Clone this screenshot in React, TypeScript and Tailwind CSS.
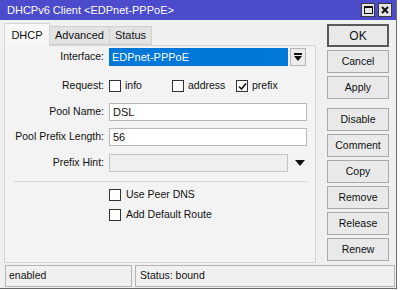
import React from "react";

function Check({ checked = false }: { checked?: boolean }) {
    return (
        <span className="w-[12px] h-[12px] border border-[#333] bg-white flex items-center justify-center shrink-0">
            {checked && (
                <svg width="9" height="9" viewBox="0 0 9 9">
                    <path d="M1 4.5 L3.5 7 L8 1.5" stroke="#111" strokeWidth="1.6" fill="none" />
                </svg>
            )}
        </span>
    );
}

function Btn({ label, strong = false, className = "" }: { label: string; strong?: boolean; className?: string }) {
    return (
        <div
            className={
                "h-[23px] w-[62px] flex items-center justify-center bg-[#e9e9e9] text-[#111] " +
                (strong ? "border-2 border-[#5a5a5a] text-[12px] " : "border border-[#a9a9a9] ") +
                className
            }
        >
            {label}
        </div>
    );
}

export default function App() {
    return (
        <div className="w-[400px] h-[290px] bg-white overflow-hidden font-['Liberation_Sans',Arial,sans-serif] text-[10.5px] text-[#111]">
            <div className="w-[397px] h-[289px] bg-[#f0f0f0] border-r border-b border-[#6b6b6b] flex flex-col">
                {/* title bar */}
                <div className="h-[20px] bg-[#4b4bcb] flex items-center pl-[7px] pr-[4px] text-white text-[11px]">
                    <span>DHCPv6 Client &lt;EDPnet-PPPoE&gt;</span>
                    <div className="ml-auto flex gap-[3px]">
                        <div className="w-[14px] h-[14px] bg-[#e4e4e4] border border-[#3a3a3a] flex items-center justify-center">
                            <span className="w-[9px] h-[8px] border border-[#111] border-t-2" />
                        </div>
                        <div className="w-[14px] h-[14px] bg-[#e4e4e4] border border-[#3a3a3a] flex items-center justify-center">
                            <svg width="8" height="8" viewBox="0 0 8 8">
                                <path d="M1 1 L7 7 M7 1 L1 7" stroke="#111" strokeWidth="2" />
                            </svg>
                        </div>
                    </div>
                </div>

                <div className="flex h-[243px]">
                    {/* tabs + panel */}
                    <div className="ml-[4px] mt-[2px] w-[312px] flex flex-col">
                        <div className="h-[23px] flex items-end">
                            <div className="h-[23px] w-[46px] bg-[#f7f7f7] border border-b-0 border-[#d4d4d4] flex items-center justify-center text-[11px] relative top-[1px]">
                                DHCP
                            </div>
                            <div className="h-[19px] w-[60px] bg-[#e3e3e3] border border-l-0 border-[#d0d0d0] flex items-center justify-center text-[11px]">
                                Advanced
                            </div>
                            <div className="h-[19px] w-[42px] bg-[#e3e3e3] border border-l-0 border-[#d0d0d0] flex items-center justify-center text-[11px]">
                                Status
                            </div>
                        </div>
                        <div className="flex-1 border border-[#d4d4d4] bg-[#f3f3f3] flex flex-col">
                            <div className="mt-[2px] h-[18px] flex items-center">
                                <span className="w-[99px] text-right">Interface:</span>
                                <div className="ml-[5px] w-[179px] h-[18px] bg-[#0078d7] text-white flex items-center pl-[3px] text-[11px]">
                                    EDPnet-PPPoE
                                </div>
                                <div className="ml-[2px] w-[16px] h-[18px] bg-[#ececec] border border-[#b5b5b5] flex items-center justify-center">
                                    <svg width="8" height="9" viewBox="0 0 8 9">
                                        <rect x="0" y="0" width="8" height="2" fill="#111" />
                                        <path d="M0 3 H8 L4 8 Z" fill="#111" />
                                    </svg>
                                </div>
                            </div>
                            <div className="mt-[11px] h-[18px] flex items-center">
                                <span className="w-[99px] text-right">Request:</span>
                                <div className="ml-[5px] w-[63px] flex items-center gap-[4px]">
                                    <Check />
                                    <span>info</span>
                                </div>
                                <div className="w-[64px] flex items-center gap-[4px]">
                                    <Check />
                                    <span>address</span>
                                </div>
                                <div className="flex items-center gap-[4px]">
                                    <Check checked />
                                    <span>prefix</span>
                                </div>
                            </div>
                            <div className="mt-[8px] h-[18px] flex items-center">
                                <span className="w-[99px] text-right">Pool Name:</span>
                                <div className="ml-[5px] w-[198px] h-[18px] bg-white border border-[#b9b9b9] flex items-center pl-[3px] text-[11px]">
                                    DSL
                                </div>
                            </div>
                            <div className="mt-[7px] h-[18px] flex items-center">
                                <span className="w-[99px] text-right">Pool Prefix Length:</span>
                                <div className="ml-[5px] w-[198px] h-[18px] bg-white border border-[#b9b9b9] flex items-center pl-[3px] text-[11px]">
                                    56
                                </div>
                            </div>
                            <div className="mt-[8px] h-[18px] flex items-center">
                                <span className="w-[99px] text-right">Prefix Hint:</span>
                                <div className="ml-[5px] w-[179px] h-[18px] bg-[#efefef] border border-[#c4c4c4]" />
                                <svg className="ml-[7px]" width="10" height="6" viewBox="0 0 10 6">
                                    <path d="M0 0 H10 L5 6 Z" fill="#111" />
                                </svg>
                            </div>
                            <div className="mt-[9px] ml-[9px] w-[293px] border-t border-[#d8d8d8]" />
                            <div className="mt-[7px] h-[12px] flex items-center">
                                <div className="ml-[104px] flex items-center gap-[5px]">
                                    <Check />
                                    <span>Use Peer DNS</span>
                                </div>
                            </div>
                            <div className="mt-[8px] h-[12px] flex items-center">
                                <div className="ml-[104px] flex items-center gap-[5px]">
                                    <Check />
                                    <span>Add Default Route</span>
                                </div>
                            </div>
                        </div>
                    </div>

                    {/* buttons */}
                    <div className="ml-[11px] mt-[4px] flex flex-col gap-[3px]">
                        <Btn label="OK" strong />
                        <Btn label="Cancel" />
                        <Btn label="Apply" />
                        <Btn label="Disable" className="mt-[6px]" />
                        <Btn label="Comment" />
                        <Btn label="Copy" />
                        <Btn label="Remove" />
                        <Btn label="Release" />
                        <Btn label="Renew" />
                    </div>
                </div>

                {/* status bar */}
                <div className="mt-[2px] h-[22px] flex gap-[3px] pl-[5px] pr-[1px]">
                    <div className="w-[127px] border border-[#b4b4b4] flex items-center pl-[3px]">enabled</div>
                    <div className="flex-1 border border-[#b4b4b4] flex items-center pl-[4px]">Status: bound</div>
                </div>
            </div>
        </div>
    );
}
